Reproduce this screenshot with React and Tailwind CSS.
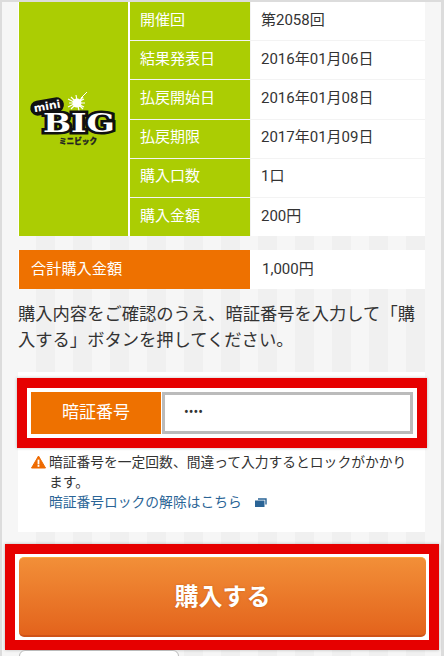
import React from 'react';

const rows = [
  ['開催回', '第2058回'],
  ['結果発表日', '2016年01月06日'],
  ['払戻開始日', '2016年01月08日'],
  ['払戻期限', '2017年01月09日'],
  ['購入口数', '1口'],
  ['購入金額', '200円'],
];

const MiniBigLogo = () => (
  <svg width="90" height="54" viewBox="0 0 90 54">
    {/* sparkle */}
    <g stroke="#fff" strokeWidth="1.2">
      <path d="M47 3l3 16M40 11l16 0M42 5l12 12M42 17l12-12M39 7l16 8M39 15l16-8" />
      <path d="M52 6L58 0" strokeWidth="1" />
    </g>
    <circle cx="48" cy="11" r="4.5" fill="#fff" />
    {/* mini */}
    <rect x="1" y="7" width="34" height="15" rx="7.5" transform="rotate(-10 18 14)" fill="#111" />
    <text x="18" y="18" textAnchor="middle" transform="rotate(-10 18 14)" fontFamily="'DejaVu Sans', sans-serif" fontWeight="700" fontSize="11" fill="#fff" textLength="27" lengthAdjust="spacingAndGlyphs">mini</text>
    {/* BIG */}
    <text x="50" y="40" textAnchor="middle" fontFamily="'DejaVu Serif', serif" fontWeight="700" fontSize="26" fill="#fff" stroke="#111" strokeWidth="5" paintOrder="stroke" textLength="72" lengthAdjust="spacingAndGlyphs">BIG</text>
    <text x="49" y="51.5" textAnchor="middle" fontFamily="'Noto Sans CJK JP', sans-serif" fontWeight="900" fontSize="7.6" fill="#222" stroke="#222" strokeWidth="0.3">ミニビック</text>
  </svg>
);

export default function App() {
  return (
    <div className="w-[444px] h-[656px] overflow-hidden bg-[#dcdcdc] pt-[2px] pl-[2px] pr-[3px] font-['Roboto','Noto_Sans_CJK_JP',sans-serif] text-[#333]">
      <div className="h-full bg-[#f6f6f6] pl-[16px] pr-[16px]">
        <div className="h-full bg-[repeating-linear-gradient(90deg,#f6f6f6_0,#f6f6f6_18.5px,#f0f0f0_18.5px,#f0f0f0_37px)]">
          {/* lottery details */}
          <div className="flex h-[234px] bg-white pl-px">
            <div className="w-[109px] bg-[#abcd03] flex items-center justify-center">
              <MiniBigLogo />
            </div>
            <div className="flex-1 ml-[2px] grid grid-rows-6 gap-px bg-[#f3f3f3]">
              {rows.map(([label, value]) => (
                <div key={label} className="flex">
                  <div className="w-[120px] bg-[#abcd03] text-white text-[15px] pl-[10px] pb-[2px] flex items-center">{label}</div>
                  <div className="flex-1 ml-px bg-white text-[15px] pl-[10px] pb-[2px] flex items-center">{value}</div>
                </div>
              ))}
            </div>
          </div>

          {/* total */}
          <div className="flex h-[39px] mt-[14px] bg-white pl-px">
            <div className="w-[231px] bg-[#ee7100] text-white text-[15.2px] pl-[12px] pb-[1px] flex items-center">合計購入金額</div>
            <div className="flex-1 pl-[12px] text-[15px] pb-[1px] flex items-center">1,000円</div>
          </div>

          <p className="h-[83px] pt-[12px] text-[17.3px] leading-[26px]">
            購入内容をご確認のうえ、暗証番号を入力して「購入する」ボタンを押してください。
          </p>

          {/* pin panel */}
          <div className="h-[160px] bg-white pt-[6px]">
            <div className="-ml-px -mr-[2px] h-[70px] border-[10px] border-[#e60000] bg-white p-[4px] flex shadow-[0_0_3px_rgba(0,0,0,0.25)]">
              <div className="w-[130px] bg-[#ee7100] text-white text-[17px] flex items-center justify-center">暗証番号</div>
              <input
                type="password"
                readOnly
                defaultValue="1234"
                className="flex-1 min-w-0 ml-px border-[3px] border-[#bbbbbb] bg-white pl-[19px] pb-[2px] text-[14px] outline-none"
              />
            </div>
            <div className="pl-[13px] pt-[4px] text-[13.77px] leading-[20px]">
              <div className="flex">
                <svg width="15" height="14" viewBox="0 0 15 14" className="mt-[3px] mr-[3px] shrink-0">
                  <path d="M7.5 1L14.5 13H.5z" fill="#ee6a00" stroke="#ee6a00" strokeLinejoin="round" />
                  <rect x="6.6" y="4.6" width="1.8" height="4.8" fill="#fff" />
                  <rect x="6.6" y="10" width="1.8" height="1.8" fill="#fff" />
                </svg>
                <div className="w-[366px]">
                  暗証番号を一定回数、間違って入力するとロックがかかります。
                  <div className="text-[#2a6496] flex items-center">
                    暗証番号ロックの解除はこちら
                    <svg width="12" height="9" viewBox="0 0 12 9" className="ml-[13px]">
                      <rect x="0" y="2.5" width="9.5" height="6.5" fill="#2a6496" />
                      <path d="M3 1h8v5.5" fill="none" stroke="#2a6496" strokeWidth="1.4" />
                    </svg>
                  </div>
                </div>
              </div>
            </div>
          </div>

          {/* submit */}
          <div className="-ml-[13px] -mr-[14px] mt-[12px] h-[106px] border-[10px] border-[#e60000] bg-white pt-[3px] pl-[4px] pr-[3px] shadow-[0_0_3px_rgba(0,0,0,0.25)]">
            <button className="w-full h-[80px] rounded-[5px] border-t border-t-[#f9a83a] border-b-2 border-b-[#cf5318] bg-[linear-gradient(#f28f38,#e3631c)] text-white text-[24px] font-bold [text-shadow:0_0_2px_rgba(160,70,0,0.5)]">
              購入する
            </button>
          </div>

          <div className="w-[160px] h-[8px] ml-px bg-white border border-[#bbbbbb] rounded-t-[6px]"></div>
        </div>
      </div>
    </div>
  );
}
